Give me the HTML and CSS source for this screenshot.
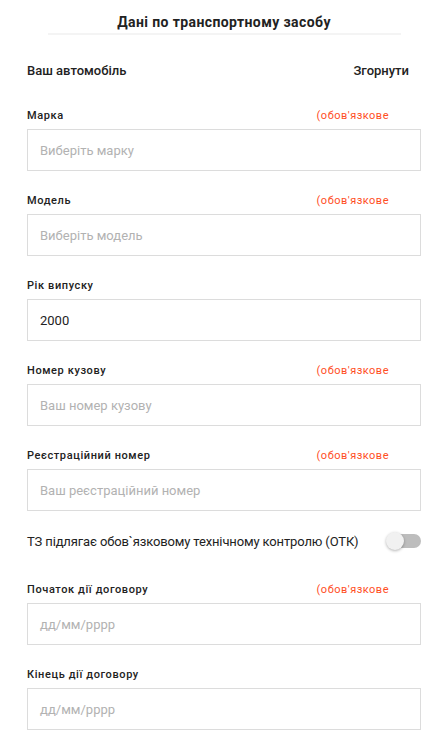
FILE: index.html
```html
<!DOCTYPE html>
<html lang="uk">
<head>
<meta charset="utf-8">
<link rel="stylesheet" href="styles.css">
</head>
<body>
<div class="page">
  <div class="title-wrap">
    <h1 class="title">Дані по транспортному засобу</h1>
    <div class="title-line"></div>
  </div>
  <div class="section-head">
    <span>Ваш автомобіль</span>
    <span>Згорнути</span>
  </div>

  <div class="field">
    <div class="label-row"><span class="label">Марка</span><span class="req">(обов'язкове</span></div>
    <div class="input placeholder">Виберіть марку</div>
  </div>
  <div class="field">
    <div class="label-row"><span class="label">Модель</span><span class="req">(обов'язкове</span></div>
    <div class="input placeholder">Виберіть модель</div>
  </div>
  <div class="field">
    <div class="label-row"><span class="label">Рік випуску</span></div>
    <div class="input">2000</div>
  </div>
  <div class="field">
    <div class="label-row"><span class="label">Номер кузову</span><span class="req">(обов'язкове</span></div>
    <div class="input placeholder">Ваш номер кузову</div>
  </div>
  <div class="field">
    <div class="label-row"><span class="label">Реєстраційний номер</span><span class="req">(обов'язкове</span></div>
    <div class="input placeholder">Ваш реєстраційний номер</div>
  </div>

  <div class="toggle-row">
    <span class="toggle-text">ТЗ підлягає обов`язковому технічному контролю (ОТК)</span>
    <span class="switch"><span class="track"></span><span class="thumb"></span></span>
  </div>

  <div class="field">
    <div class="label-row"><span class="label">Початок дії договору</span><span class="req">(обов'язкове</span></div>
    <div class="input placeholder">дд/мм/рррр</div>
  </div>
  <div class="field">
    <div class="label-row"><span class="label">Кінець дії договору</span></div>
    <div class="input placeholder">дд/мм/рррр</div>
  </div>
</div>
</body>
</html>
```

FILE: styles.css
```css
html, body {
  margin: 0;
  padding: 0;
  background: #fff;
}
body {
  font-family: Roboto, "Liberation Sans", Arial, sans-serif;
  color: #222;
}
.page {
  width: 394px;
  padding: 0 26px 0 27px;
}
.title-wrap {
  padding-top: 13px;
  display: flex;
  flex-direction: column;
  align-items: center;
}
.title {
  margin: 0;
  font-size: 14px;
  font-weight: 700;
  letter-spacing: 0.4px;
  line-height: 19px;
  color: #222;
  text-align: center;
}
.title-line {
  margin-top: 1px;
  width: 353px;
  height: 2px;
  background: #f4f4f4;
}
.section-head {
  margin-top: 26px;
  display: flex;
  justify-content: space-between;
  font-size: 13px;
  font-weight: 500;
  line-height: 20px;
  padding-right: 12px;
  color: #222;
}
.field {
  margin-top: 22px;
}
.section-head + .field {
  margin-top: 27px;
}
.label-row {
  display: flex;
  justify-content: space-between;
  line-height: 16px;
  height: 16px;
  font-size: 11px;
}
.label {
  font-weight: 500;
  letter-spacing: 0.6px;
  color: #222;
}
.req {
  color: #ff4e1f;
  letter-spacing: 0.5px;
  margin-right: 32px;
}
.input {
  margin-top: 5px;
  box-sizing: border-box;
  height: 42px;
  border: 1px solid #dcdcdc;
  padding: 0 12px;
  display: flex;
  align-items: center;
  font-size: 13px;
  color: #222;
}
.input.placeholder {
  color: #b2b2b2;
}
.toggle-row {
  margin-top: 20px;
  height: 20px;
  display: flex;
  align-items: center;
  justify-content: space-between;
  font-size: 13px;
  color: #222;
}
.toggle-text {
  letter-spacing: -0.14px;
}
.toggle-row + .field {
  margin-top: 31px;
}
.switch {
  position: relative;
  width: 35px;
  height: 20px;
  display: flex;
  align-items: center;
  justify-content: flex-end;
}
.track {
  width: 32px;
  height: 14px;
  border-radius: 7px;
  background: #bdbdbd;
}
.thumb {
  position: absolute;
  left: 0;
  top: 1px;
  width: 18px;
  height: 18px;
  border-radius: 50%;
  background: #f1f1f1;
  box-shadow: 0 1px 3px rgba(0,0,0,0.3);
}
```
